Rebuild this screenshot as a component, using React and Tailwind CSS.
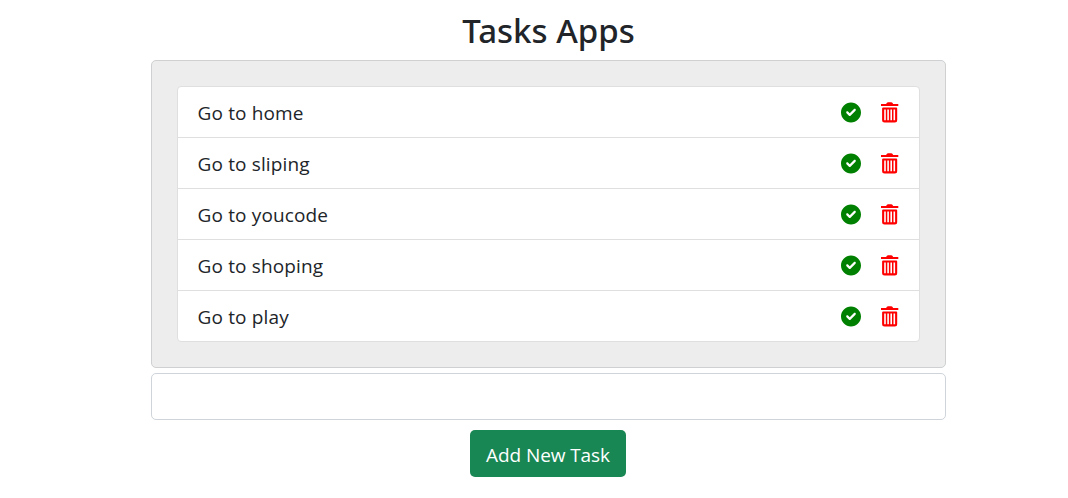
import React from "react";

const tasks = ["Go to home", "Go to sliping", "Go to youcode", "Go to shoping", "Go to play"];

function CheckIcon() {
  return (
    <svg viewBox="0 -10 512 512" className="size-5 overflow-visible" fill="#008000" aria-hidden="true">
      <path d="M0 256C0 114.600 114.600 0 256 0s256 114.600 256 256-114.600 256-256 256S0 397.400 0 256zM371.800 211.800c11-10.900 11-28.700 0-39.600-10.900-11-28.700-11-39.600 0L224 280.400l-44.200-44.200c-10.900-11-28.700-11-39.600 0-11 10.900-11 28.700 0 39.600l64 64c10.900 11 28.700 11 39.600 0l128-128z" />
    </svg>
  );
}

function TrashIcon() {
  return (
    <svg viewBox="0 0 18 20" className="h-5 w-[18px] overflow-visible" aria-hidden="true">
      <path fill="#f00" d="M7 .3h3.300q1.200 0 1.900 1.700h5.100v2H0V2h5.100Q5.800.3 7 .3z" />
      <path fill="#f00" fillRule="evenodd" d="M1.100 6.500q0-1 1-1h13.100q1 0 1 1v11.500a2.500 2.500 0 0 1-2.500 2.500H3.600a2.500 2.500 0 0 1-2.500-2.500zM3.200 7.500v10.700h1.600V7.500zm3.100 0v10.700h1.600V7.500zm3.100 0v10.700h1.600V7.500zm3.100 0v10.700h1.600V7.500z" />
    </svg>
  );
}

export default function App() {
  return (
    <main className="flex h-[498px] flex-col items-center overflow-hidden bg-white pl-[29px] font-['Open_Sans',sans-serif] text-xl text-[#212529]">
      <h1 className="mt-3 h-12 font-['Noto_Sans',sans-serif] text-[33px] leading-[38px] font-medium">Tasks Apps</h1>
      <section className="h-[308px] w-[795px] rounded-[5px] border border-[#ced0d2] bg-[#ededed] p-[25px]">
        <ul className="divide-y divide-[#dfdfdf] rounded border border-[#dfdfdf] bg-white">
          {tasks.map((task) => (
            <li key={task} className="flex h-[51px] items-center justify-between pr-5 pl-[19.5px] last:h-[50px]">
              <span className="pt-0.5 text-[19px] leading-[30px] tracking-[0.15px]">{task}</span>
              <span className="flex items-center gap-5">
                <button type="button" aria-label="Complete"><CheckIcon /></button>
                <button type="button" aria-label="Delete"><TrashIcon /></button>
              </span>
            </li>
          ))}
        </ul>
      </section>
      <input className="mt-[5px] h-[47px] w-[795px] rounded-[5px] border border-[#ced4da] bg-white px-4 outline-none" />
      <button type="button" className="mt-2.5 mr-px h-[47px] w-[156px] rounded-[5px] bg-[#198754] pt-[3px] text-[19px] tracking-[-0.08px] whitespace-nowrap text-white">Add New Task</button>
    </main>
  );
}
